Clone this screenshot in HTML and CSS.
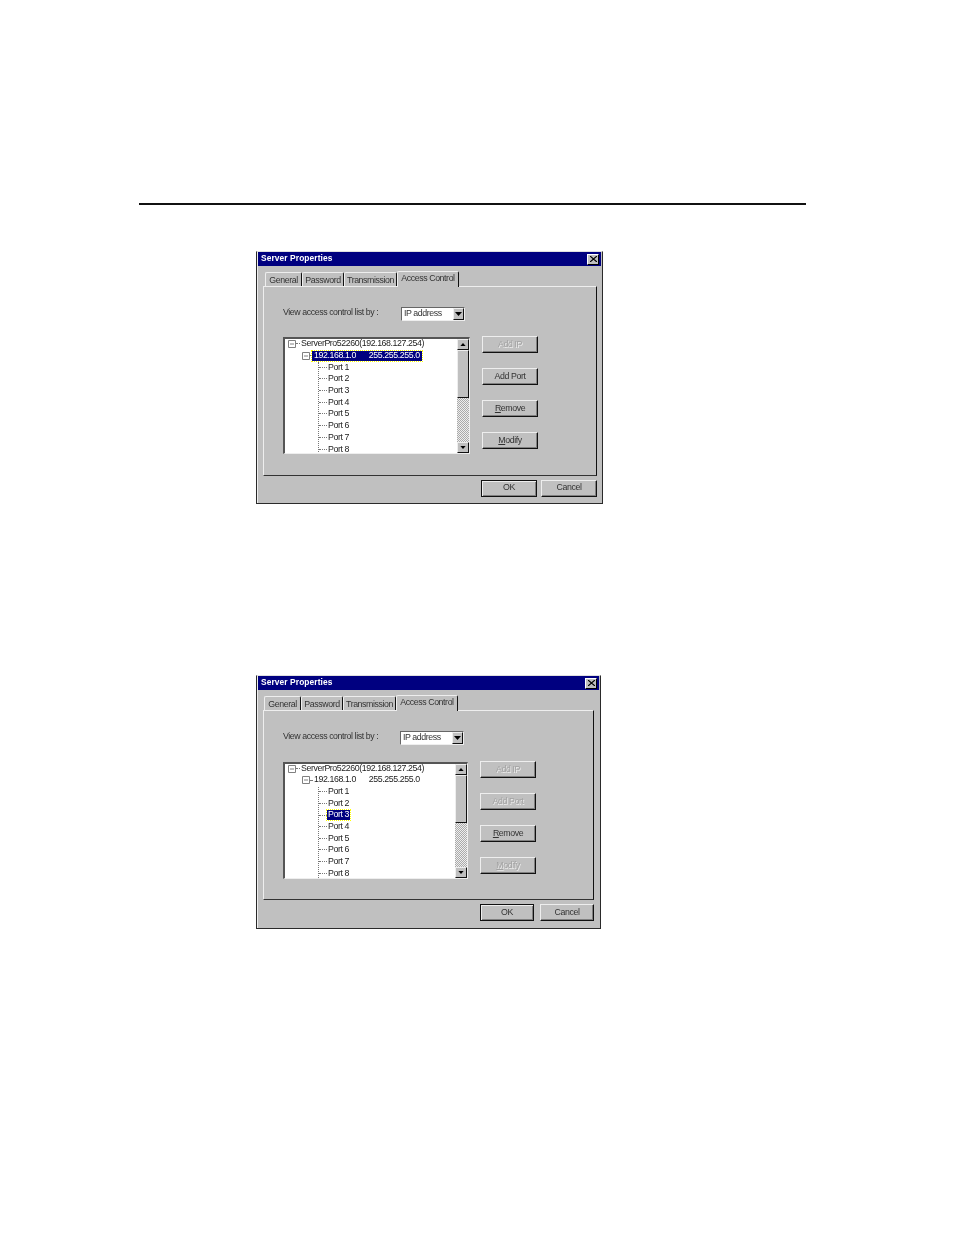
FILE: index.html
```html
<!DOCTYPE html>
<html lang="en">
<head>
<meta charset="utf-8">
<title>Server Properties</title>
<link rel="stylesheet" href="styles.css">
</head>
<body>
<div class="rule"></div>

<section class="dialog dialog-a">
  <header class="title"><span>Server Properties</span><button class="close"><svg viewBox="0 0 8 7" width="7" height="6"><path d="M0 0L8 7M8 0L0 7" stroke="#000" stroke-width="1.3"/></svg></button></header>
  <nav class="tabs">
    <span class="tab t1">General</span><span class="tab t2">Password</span><span class="tab t3">Transmission</span><span class="tab active">Access Control</span>
  </nav>
  <div class="panel">
    <div class="view-row"><span class="view-label">View access control list by :</span>
      <div class="select"><span>IP address</span><i class="sbtn"><svg viewBox="0 0 7 4" width="7" height="4"><path d="M0 0H7L3.5 4Z"/></svg></i></div>
    </div>
    <div class="main">
      <div class="tree">
        <div class="tree-list">
          <div class="row root"><svg class="exp" viewBox="0 0 8 8" width="8" height="8"><path d="M.5.5h7v7h-7zM2 4h4" fill="#fff" stroke="#808080"/></svg><span class="dash short"></span><span>ServerPro52260(192.168.127.254)</span></div>
          <div class="row net"><svg class="exp" viewBox="0 0 8 8" width="8" height="8"><path d="M.5.5h7v7h-7zM2 4h4" fill="#fff" stroke="#808080"/></svg><span class="dash short"></span><span class="sel net-text"><span>192.168.1.0</span><span>255.255.255.0</span></span></div>
          <div class="ports">
            <div class="row port"><span class="dash"></span><span>Port 1</span></div>
            <div class="row port"><span class="dash"></span><span>Port 2</span></div>
            <div class="row port"><span class="dash"></span><span>Port 3</span></div>
            <div class="row port"><span class="dash"></span><span>Port 4</span></div>
            <div class="row port"><span class="dash"></span><span>Port 5</span></div>
            <div class="row port"><span class="dash"></span><span>Port 6</span></div>
            <div class="row port"><span class="dash"></span><span>Port 7</span></div>
            <div class="row port"><span class="dash"></span><span>Port 8</span></div>
          </div>
        </div>
        <div class="scroll">
          <i class="arrow"><svg viewBox="0 0 7 4" width="6" height="3"><path d="M0 4H7L3.500 0Z"/></svg></i>
          <i class="thumb"></i><i class="track"></i>
          <i class="arrow"><svg viewBox="0 0 7 4" width="6" height="3"><path d="M0 0H7L3.5 4Z"/></svg></i>
        </div>
      </div>
      <div class="actions">
        <button class="btn off">Add IP</button>
        <button class="btn">Add Port</button>
        <button class="btn"><u>R</u>emove</button>
        <button class="btn"><u>M</u>odify</button>
      </div>
    </div>
  </div>
  <footer class="foot"><button class="btn default">OK</button><button class="btn">Cancel</button></footer>
</section>

<section class="dialog dialog-b">
  <header class="title"><span>Server Properties</span><button class="close"><svg viewBox="0 0 8 7" width="7" height="6"><path d="M0 0L8 7M8 0L0 7" stroke="#000" stroke-width="1.3"/></svg></button></header>
  <nav class="tabs">
    <span class="tab t1">General</span><span class="tab t2">Password</span><span class="tab t3">Transmission</span><span class="tab active">Access Control</span>
  </nav>
  <div class="panel">
    <div class="view-row"><span class="view-label">View access control list by :</span>
      <div class="select"><span>IP address</span><i class="sbtn"><svg viewBox="0 0 7 4" width="7" height="4"><path d="M0 0H7L3.5 4Z"/></svg></i></div>
    </div>
    <div class="main">
      <div class="tree">
        <div class="tree-list">
          <div class="row root"><svg class="exp" viewBox="0 0 8 8" width="8" height="8"><path d="M.5.5h7v7h-7zM2 4h4" fill="#fff" stroke="#808080"/></svg><span class="dash short"></span><span>ServerPro52260(192.168.127.254)</span></div>
          <div class="row net"><svg class="exp" viewBox="0 0 8 8" width="8" height="8"><path d="M.5.5h7v7h-7zM2 4h4" fill="#fff" stroke="#808080"/></svg><span class="dash short"></span><span class="net-text"><span>192.168.1.0</span><span>255.255.255.0</span></span></div>
          <div class="ports">
            <div class="row port"><span class="dash"></span><span>Port 1</span></div>
            <div class="row port"><span class="dash"></span><span>Port 2</span></div>
            <div class="row port"><span class="dash"></span><span class="sel">Port 3</span></div>
            <div class="row port"><span class="dash"></span><span>Port 4</span></div>
            <div class="row port"><span class="dash"></span><span>Port 5</span></div>
            <div class="row port"><span class="dash"></span><span>Port 6</span></div>
            <div class="row port"><span class="dash"></span><span>Port 7</span></div>
            <div class="row port"><span class="dash"></span><span>Port 8</span></div>
          </div>
        </div>
        <div class="scroll">
          <i class="arrow"><svg viewBox="0 0 7 4" width="6" height="3"><path d="M0 4H7L3.500 0Z"/></svg></i>
          <i class="thumb"></i><i class="track"></i>
          <i class="arrow"><svg viewBox="0 0 7 4" width="6" height="3"><path d="M0 0H7L3.5 4Z"/></svg></i>
        </div>
      </div>
      <div class="actions">
        <button class="btn off">Add IP</button>
        <button class="btn off">Add Port</button>
        <button class="btn"><u>R</u>emove</button>
        <button class="btn off"><u>M</u>odify</button>
      </div>
    </div>
  </div>
  <footer class="foot"><button class="btn default">OK</button><button class="btn">Cancel</button></footer>
</section>
</body>
</html>
```

FILE: styles.css
```css
* { box-sizing: border-box; }
html, body { margin: 0; background: #fff; }
body { height: 1235px; overflow: hidden; font: 8.8px/11px "Liberation Sans", Arial, sans-serif; letter-spacing: -.42px; color: #1c1c1c; }

.rule { height: 2px; margin: 203px 148px 0 139px; background: #111; }

.dialog {
  --w: 347px; --panel: 334px; --tree: 187px; --label: 118px; --ok: 56px; --gap: 4px; --tabshift: 0px; --main-top: 16px; --row: 11.7px; --foot-pad: 2px;
  width: var(--w); height: 253px; margin-left: 256px; margin-top: 46px;
  background: #c0c0c0; border: 1px solid #2a2a2a; border-top-color: #e0e0e0;
  padding: 0 1px; box-shadow: inset 1px 0 #eee;
  display: flex; flex-direction: column; filter: blur(.25px);
}
.dialog-b { --w: 345px; --panel: 331px; --tree: 185px; --label: 117px; --ok: 54px; --gap: 6px; --tabshift: -1px; --main-top: 17px; --row: 11.6px; --foot-pad: 0px; margin-top: 171px; height: 254px; }

.title {
  height: 14px; background: #000080; color: #fff; font-weight: 700; font-size: 8.4px; letter-spacing: .1px;
  display: flex; align-items: center; justify-content: space-between; padding: 0 2px 2px 3px; flex: none;
}
.close {
  width: 12px; height: 11px; padding: 0; margin-top: 2px; background: #c0c0c0; display: flex; align-items: center; justify-content: center;
  border: 1px solid; border-color: #fff #000 #000 #fff;
}

.tabs { display: flex; align-items: flex-end; height: 20px; padding-left: calc(7px + var(--tabshift)); flex: none; }
.tab {
  height: 15px; display: flex; align-items: center; justify-content: center; color: #333;
  border: 1px solid #eee; border-bottom: 0; border-right: 1px solid #111; border-radius: 2px 2px 0 0;
  margin-bottom: -1px; padding-top: 1px;
}
.t1 { width: 37px; }
.t2 { width: 42px; }
.t3 { width: 53px; }
.tab.active { width: 62px; height: 16px; padding: 0 0 2px; position: relative; z-index: 1; background: #c0c0c0; border-bottom: 0; }

.panel {
  width: var(--panel); height: 190px; margin-left: 5px; flex: none;
  border: 1px solid; border-color: #eee #111 #333 #eee; padding: 20px 0 0 19px;
}
.view-row { display: flex; align-items: center; height: 14px; }
.view-label { width: var(--label); flex: none; color: #333; padding-bottom: 3px; }
.select {
  width: 64px; height: 14px; background: #fff; display: flex; align-items: center; justify-content: space-between;
  border: 1px solid; border-color: #666 #eee #eee #666; padding-left: 2px; color: #333;
}
.select > span { padding-bottom: 1px; }
.sbtn, .arrow {
  display: flex; align-items: center; justify-content: center; background: #c0c0c0;
  border: 1px solid; border-color: #eee #111 #111 #eee;
}
.sbtn { width: 11px; height: 12px; }

.main { display: flex; gap: 12px; margin-top: var(--main-top); }
.tree {
  width: var(--tree); height: 117px; flex: none; background: #fff; display: flex; overflow: hidden;
  border: 1px solid; border-color: #555 #eee #eee #555; border-width: 2px 1px 1px 2px;
}
.tree-list { flex: 1; overflow: hidden; min-width: 0; }
.row { display: flex; align-items: center; height: var(--row); white-space: nowrap; color: #1c1c1c; }
.row > span:last-child { padding-bottom: 2px; }
.root { padding-left: 3px; }
.net { padding-left: 17px; }
.exp { flex: none; margin-bottom: 2px; }
.dash { display: inline-block; width: 8px; border-top: 1px dotted #777; margin: 0 1px 2px 0; flex: none; }
.root .short { width: 4px; margin-right: 1px; }
.net .short { width: 2px; margin-right: 1px; }
.row > .net-text { display: flex; gap: 13px; padding: 0 1px 0 2px; height: 11px; align-items: center; width: 110px; margin: 0 0 2px -1px; }
.sel { background: #000080; color: #fff; outline: 1px dotted #ff0; outline-offset: 0; height: 10px; display: inline-flex; align-items: center; }
.row > .sel { padding: 0 1px; margin: 0 0 2px -1px; }
.row > .sel.net-text { padding: 0 1px 0 2px; height: 10px; margin: 0 0 2px -1px; }
.ports { margin-left: 33px; border-left: 1px dotted #777; }

.scroll { width: 12px; flex: none; display: flex; flex-direction: column; }
.arrow { height: 11px; flex: none; }
.thumb { height: 48px; flex: none; background: #c0c0c0; border: 1px solid; border-color: #eee #111 #111 #eee; }
.track { flex: 1; background: repeating-conic-gradient(#aaa 0 25%, #eee 0 50%) 0 0 / 2px 2px; }

.actions { display: flex; flex-direction: column; gap: 15px; margin-top: -1px; }
.btn {
  width: 56px; height: 17px; padding: 0; background: #c0c0c0; font: inherit; letter-spacing: inherit; color: #333;
  border: 1px solid; border-color: #eee #111 #111 #eee; box-shadow: inset -1px -1px #808080;
}
.btn.off { color: #a2a2a2; text-shadow: .7px .7px #eee; }

.foot { display: flex; justify-content: flex-end; gap: var(--gap); padding: 4px 0 0; width: calc(var(--panel) + 5px); }
.foot .btn { width: var(--ok); padding-bottom: var(--foot-pad); }
.btn.default { border-color: #111; box-shadow: inset 1px 1px #eee, inset -1px -1px #808080; }
```
